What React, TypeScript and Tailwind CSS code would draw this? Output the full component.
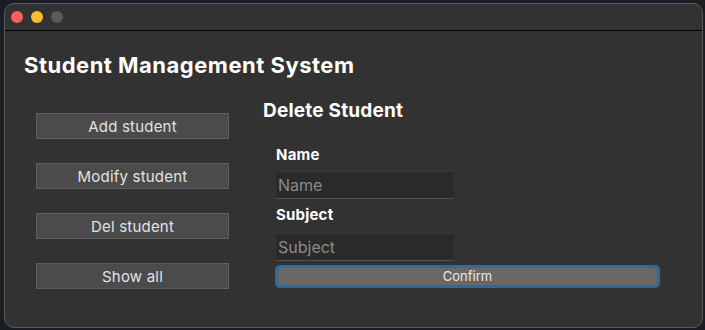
import { useState } from "react";

const MENU = ["Add student", "Modify student", "Del student", "Show all"];

export default function App() {
  const [name, setName] = useState("");
  const [subject, setSubject] = useState("");

  return (
    <div
      className="w-[705px] h-[330px] bg-[#1b1d25] pt-[3px] pl-[4px] pr-[2px] pb-[2px]"
      style={{ fontFamily: "Inter, 'Liberation Sans', sans-serif" }}
    >
      <div className="h-full flex flex-col rounded-[10px] border border-[#5a5a5a] bg-[#323232] overflow-hidden">
        {/* title bar */}
        <div className="h-[27px] shrink-0 flex items-center gap-[8px] pl-[6px] border-b border-black">
          <span className="w-[12px] h-[12px] rounded-full bg-[#fe5f57]" />
          <span className="w-[12px] h-[12px] rounded-full bg-[#febc2e]" />
          <span className="w-[12px] h-[12px] rounded-full bg-[#5a5a5a]" />
        </div>

        <div className="flex-1">
          <h1 className="pl-[19px] pt-[20px] text-[22px] leading-[28px] tracking-[0.5px] font-bold text-white">
            Student Management System
          </h1>

          <div className="flex mt-[18px]">
            <div className="ml-[31px] mt-[16px] w-[193px] flex flex-col gap-[24px]">
              {MENU.map((label) => (
                <button
                  key={label}
                  className="h-[26px] pt-[1px] bg-[#4b4b4b] border border-[#5f5f5f] text-[15px] tracking-[0.2px] text-[#e2e2e2] leading-none"
                >
                  {label}
                </button>
              ))}
            </div>

            <div className="ml-[34px] flex flex-col">
              <h2 className="text-[19px] leading-[28px] tracking-[0.2px] font-bold text-white">Delete Student</h2>
              <label className="ml-[13px] mt-[20px] text-[15px] leading-[20px] tracking-[0.2px] font-bold text-white">Name</label>
              <input
                value={name}
                onChange={(e) => setName(e.target.value)}
                placeholder="Name"
                className="ml-[13px] mt-[6px] w-[178px] h-[28px] px-[2px] bg-[#2a2a2a] border-t border-t-[#393939] border-b border-b-[#505050] text-[16px] text-white placeholder:text-[#8a8a8a] outline-none"
              />
              <label className="ml-[13px] mt-[6px] text-[15px] leading-[20px] tracking-[0.2px] font-bold text-white">Subject</label>
              <input
                value={subject}
                onChange={(e) => setSubject(e.target.value)}
                placeholder="Subject"
                className="ml-[13px] mt-[8px] w-[178px] h-[28px] px-[2px] bg-[#2a2a2a] border-t border-t-[#393939] border-b border-b-[#505050] text-[16px] text-white placeholder:text-[#8a8a8a] outline-none"
              />
              <button className="ml-[12px] mt-[4px] w-[385px] h-[23px] rounded-[5px] border-[3px] border-[#2b6c9f] bg-[#686868] text-[13px] leading-none text-[#e8e8e8]">
                Confirm
              </button>
            </div>
          </div>
        </div>
      </div>
    </div>
  );
}
